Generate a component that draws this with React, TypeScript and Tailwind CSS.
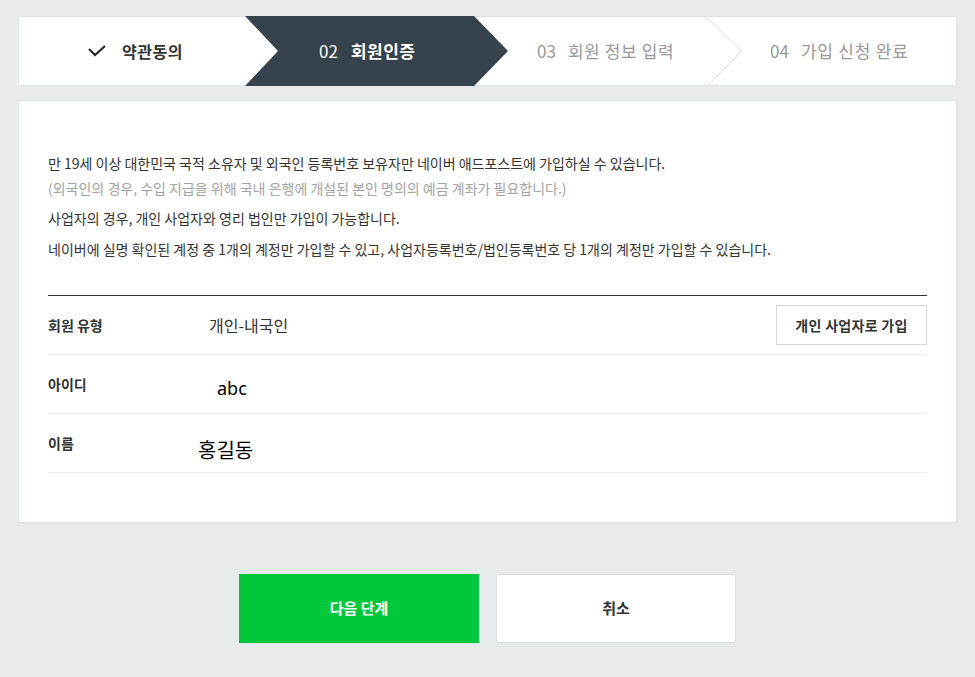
import React from "react";

const font = { fontFamily: '"Noto Sans CJK KR", "Noto Sans", sans-serif' };

export default function App() {
  return (
    <div
      className="min-h-screen w-full bg-[#e8ebee] px-[18px] pt-[16px] pb-[35px] text-[#333]"
      style={font}
    >
      {/* Steps */}
      <div className="relative flex h-[70px] w-full border border-[#dfe3e6] bg-white">
        <div className="flex w-[226px] items-center pl-[69px]">
          <svg width="18" height="12" viewBox="0 0 18 12" className="mr-[16px]">
            <polyline
              points="1,4 7,10 17,1"
              fill="none"
              stroke="#222"
              strokeWidth="2"
            />
          </svg>
          <span className="text-[16px] font-bold tracking-[0.5px] text-[#333]">약관동의</span>
        </div>
        <div className="relative flex w-[263px] items-center pl-[74px]">
          <svg
            className="absolute left-0 top-[-1px]"
            width="264"
            height="70"
            viewBox="0 0 264 70"
          >
            <polygon points="0,0 229,0 263,35 229,70 0,70 33,35" fill="#37434c" />
          </svg>
          <span className="relative text-[17px] text-white">
            02<span className="ml-[13px] font-bold tracking-[0.5px]">회원인증</span>
          </span>
        </div>
        <div className="relative flex w-[217px] items-center pl-[29px]">
          <svg
            className="absolute left-[197px] top-[-1px]"
            width="40"
            height="70"
            viewBox="0 0 40 70"
          >
            <polyline
              points="0,0 37,35 2,70"
              fill="none"
              stroke="#dadde0"
              strokeWidth="1"
            />
          </svg>
          <span className="text-[17px] text-[#999]">
            03<span className="ml-[12px] tracking-[0.6px]">회원 정보 입력</span>
          </span>
        </div>
        <div className="flex flex-1 items-center pl-[45px]">
          <span className="text-[17px] text-[#999]">
            04<span className="ml-[12px] tracking-[0.8px]">가입 신청 완료</span>
          </span>
        </div>
      </div>

      {/* Card */}
      <div className="mt-[14px] border border-[#dfe3e6] bg-white px-[29px] pt-[50px] pb-[49px]">
        <div className="text-[14px] leading-[25px]">
          <p className="text-[#333]">
            만 19세 이상 대한민국 국적 소유자 및 외국인 등록번호 보유자만 네이버 애드포스트에 가입하실 수 있습니다.
          </p>
          <p className="text-[#a3a3a3]">
            (외국인의 경우, 수입 지급을 위해 국내 은행에 개설된 본인 명의의 예금 계좌가 필요합니다.)
          </p>
          <p className="mt-[5px] text-[#333]">
            사업자의 경우, 개인 사업자와 영리 법인만 가입이 가능합니다.
          </p>
          <p className="mt-[6px] text-[#333]">
            네이버에 실명 확인된 계정 중 1개의 계정만 가입할 수 있고, 사업자등록번호/법인등록번호 당 1개의 계정만 가입할 수 있습니다.
          </p>
        </div>

        <div className="mt-[33px] border-t border-[#333]">
          <div className="flex h-[59px] items-center border-b border-[#eceeef]">
            <div className="w-[161px] text-[14px] font-bold text-[#333]">회원 유형</div>
            <div className="flex-1 text-[16px] text-[#333]">개인-내국인</div>
            <button className="h-[40px] w-[151px] border border-[#d3d7da] bg-white text-[14px] font-bold tracking-[0.3px] text-[#333]">
              개인 사업자로 가입
            </button>
          </div>
          <div className="flex h-[59px] items-center border-b border-[#eceeef]">
            <div className="w-[161px] text-[14px] font-bold text-[#333]">아이디</div>
            <div
              className="mt-[8px] pl-[8px] text-[18px] text-black"
              style={{ fontFamily: '"Noto Sans", sans-serif' }}
            >
              abc
            </div>
          </div>
          <div className="flex h-[59px] items-center border-b border-[#eceeef]">
            <div className="w-[161px] text-[14px] font-bold text-[#333]">이름</div>
            <div className="mt-[14px] ml-[-11px] text-[20px] text-black">홍길동</div>
          </div>
        </div>
      </div>

      {/* Buttons */}
      <div className="mt-[51px] flex justify-center gap-[17px]">
        <button className="h-[69px] w-[240px] bg-[#00c73c] text-[15px] font-bold text-white">
          다음 단계
        </button>
        <button className="h-[69px] w-[240px] border border-[#dcdfe2] bg-white text-[15px] font-bold text-[#333]">
          취소
        </button>
      </div>
    </div>
  );
}
